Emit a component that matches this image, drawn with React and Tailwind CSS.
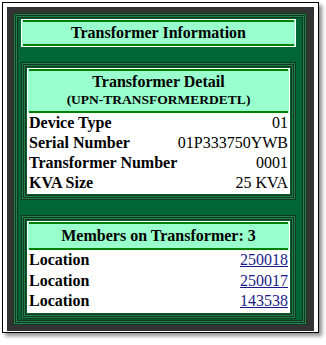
import * as React from "react"

// stripe bands, outside -> in, 1px each
const bandClasses = [
  "border border-[#123822]",
  "border border-[#23804a]",
  "border border-[#123822]",
  "border border-[#23804a]",
  "border border-[#123822]",
  "border border-[#0a5c2e]",
]

const Stripes = ({ children }) => {
  return bandClasses.reduceRight(
    (inner, cls, i) => <div key={i} className={cls}>{inner}</div>,
    children
  )
}

const GreenBar = () => <div className="mx-[1px] h-[2px] bg-[#008000]" />

const Header = ({ children }) => {
  return (
    <div className="bg-[#99ffcc]">
      <GreenBar />
      <div className="text-center font-bold">{children}</div>
      <GreenBar />
    </div>
  )
}

const Row = ({ label, value, link, h = "h-[20px]" }) => {
  return (
    <div className={`flex items-center justify-between ${h} px-[1px]`}>
      <span className="font-bold">{label}</span>
      {link ? (
        <a href="#" className="text-[#1a1a88] underline">{value}</a>
      ) : (
        <span>{value}</span>
      )}
    </div>
  )
}

const detailRows = [
  { label: "Device Type", value: "01" },
  { label: "Serial Number", value: "01P333750YWB" },
  { label: "Transformer Number", value: "0001" },
  { label: "KVA Size", value: "25 KVA" },
]

const members = ["250018", "250017", "143538"]

export default function App() {
  return (
    <div className="pl-[2px] pt-[2px] bg-white min-h-[345px]">
      <div className="w-[317px] border border-black bg-white p-[4px] pb-[1px] shadow-[3px_3px_4px_rgba(0,0,0,0.45)] font-['Liberation_Serif','Times_New_Roman',serif] text-[16px] leading-[18px] text-black">
        <div className="border-[6px] border-r-[7px] border-[#333333]">
          <Stripes>
            <div className="bg-[#006633] pl-[2px] pr-[5px]">
              {/* title */}
              <div className="border border-white">
                <Header>
                  <div className="h-[22px] flex items-center justify-center">Transformer Information</div>
                </Header>
              </div>

              <div className="h-[15px]" />

              {/* detail */}
              <Stripes>
                <div className="border border-white bg-white">
                  <Header>
                    <div className="h-[40px] flex flex-col justify-center">
                      <div className="leading-[18px]">Transformer Detail</div>
                      <div className="text-[13.5px] leading-[18px]">(UPN-TRANSFORMERDETL)</div>
                    </div>
                  </Header>
                  {detailRows.map((r) => (
                    <Row key={r.label} label={r.label} value={r.value} />
                  ))}
                </div>
              </Stripes>

              <div className="h-[15px]" />

              {/* members */}
              <Stripes>
                <div className="border border-white bg-white">
                  <Header>
                    <div className="h-[24px] flex items-center justify-center">Members on Transformer: 3</div>
                  </Header>
                  {members.map((m) => (
                    <Row key={m} label="Location" value={m} link h="h-[20.5px]" />
                  ))}
                </div>
              </Stripes>
            </div>
          </Stripes>
        </div>
      </div>
    </div>
  )
}
